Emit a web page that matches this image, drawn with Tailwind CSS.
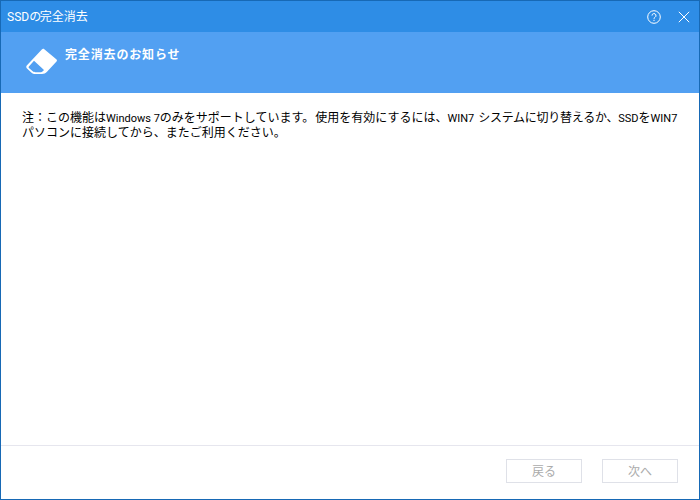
<!DOCTYPE html>
<html lang="ja">
<head>
    <meta charset="UTF-8">
    <title>SSDの完全消去</title>
    <script src="https://cdn.jsdelivr.net/npm/@tailwindcss/browser@4"></script>
</head>
<body class="bg-white">
    <div class="w-[700px] h-[500px] flex flex-col border border-t-0 border-[#1769b5] bg-white font-['Noto_Sans_CJK_JP',sans-serif] text-[12px] overflow-hidden">
        <!-- title bar -->
        <div class="h-[32px] shrink-0 flex items-center bg-[#2e8de6] border-t border-[#1769b5] pl-[6px] pr-[9px] text-white">
            <span><span class="font-['Roboto',sans-serif]">SSD</span><span class="tracking-[-1.5px]">の</span>完全消去</span>
            <div class="ml-auto flex items-center gap-[17px]">
                <svg width="14" height="14" viewBox="0 0 14 14" fill="none" stroke="white" stroke-width="1">
                    <circle cx="7" cy="7" r="6.300"/>
                    <path d="M5 5.600a2 2 0 1 1 3 1.700c-.7.400-1 .8-1 1.500"/>
                    <path d="M7 9.800v1.200"/>
                </svg>
                <svg width="12" height="12" viewBox="0 0 12 12" fill="none" stroke="white" stroke-width="1">
                    <path d="M.8.800l10.400 10.400M11.200.800L.8 11.200"/>
                </svg>
            </div>
        </div>
        <!-- banner -->
        <div class="h-[61px] shrink-0 flex bg-[#52a0f2] text-white">
            <svg class="ml-[25px] mt-[16px]" width="32" height="27" viewBox="0 0 32 27">
                <path fill="white" d="M15.800 1.500c.8-.8 1.700-.8 2.500-.2l12 10c.8.700.8 1.500.2 2.200L21 23.800c-1.500 1.600-3 2.200-5 2.200H9.500c-1.700 0-3-.5-4.200-1.600L1 20.500c-1-1-1-2.200 0-3.200z"/>
                <path fill="#52a0f2" d="M8 12.700l10 9.300-.9 1c-.9.900-1.800 1.300-3.100 1.300H9.500c-1.300 0-2.200-.4-3.100-1.200L2.900 20c-.5-.5-.5-1 0-1.500z"/>
            </svg>
            <span class="ml-[7px] mt-[13px] font-bold tracking-[0.85px]">完全消去のお知らせ</span>
        </div>
        <!-- message -->
        <div class="flex-1 pt-[17px] pl-[21px] leading-[13px] text-black">
            <p class="whitespace-nowrap">注：この機能は<span class="font-['Roboto',sans-serif] text-[11px]">Windows 7</span>のみをサポートしています。<span class="ml-[1px]">使用を有効にするには、</span><span class="font-['Roboto',sans-serif] text-[11px]">WIN7</span><span class="ml-[4px] tracking-[-0.25px]">システムに切り替えるか、</span><span class="font-['Roboto',sans-serif] text-[11px]">SSD</span>を<span class="font-['Roboto',sans-serif] text-[11px]">WIN7</span><br>パソコンに接続してから、またご利用ください。</p>
        </div>
        <!-- footer -->
        <div class="h-[54px] shrink-0 flex justify-end items-start gap-[20px] border-t border-[#e6e6ee] pt-[13px] pr-[21px]">
            <button class="w-[76px] h-[24px] border border-[#dfe1e8] text-[#ababab]">戻る</button>
            <button class="w-[76px] h-[24px] border border-[#dfe1e8] text-[#ababab]">次へ</button>
        </div>
    </div>
</body>
</html>
